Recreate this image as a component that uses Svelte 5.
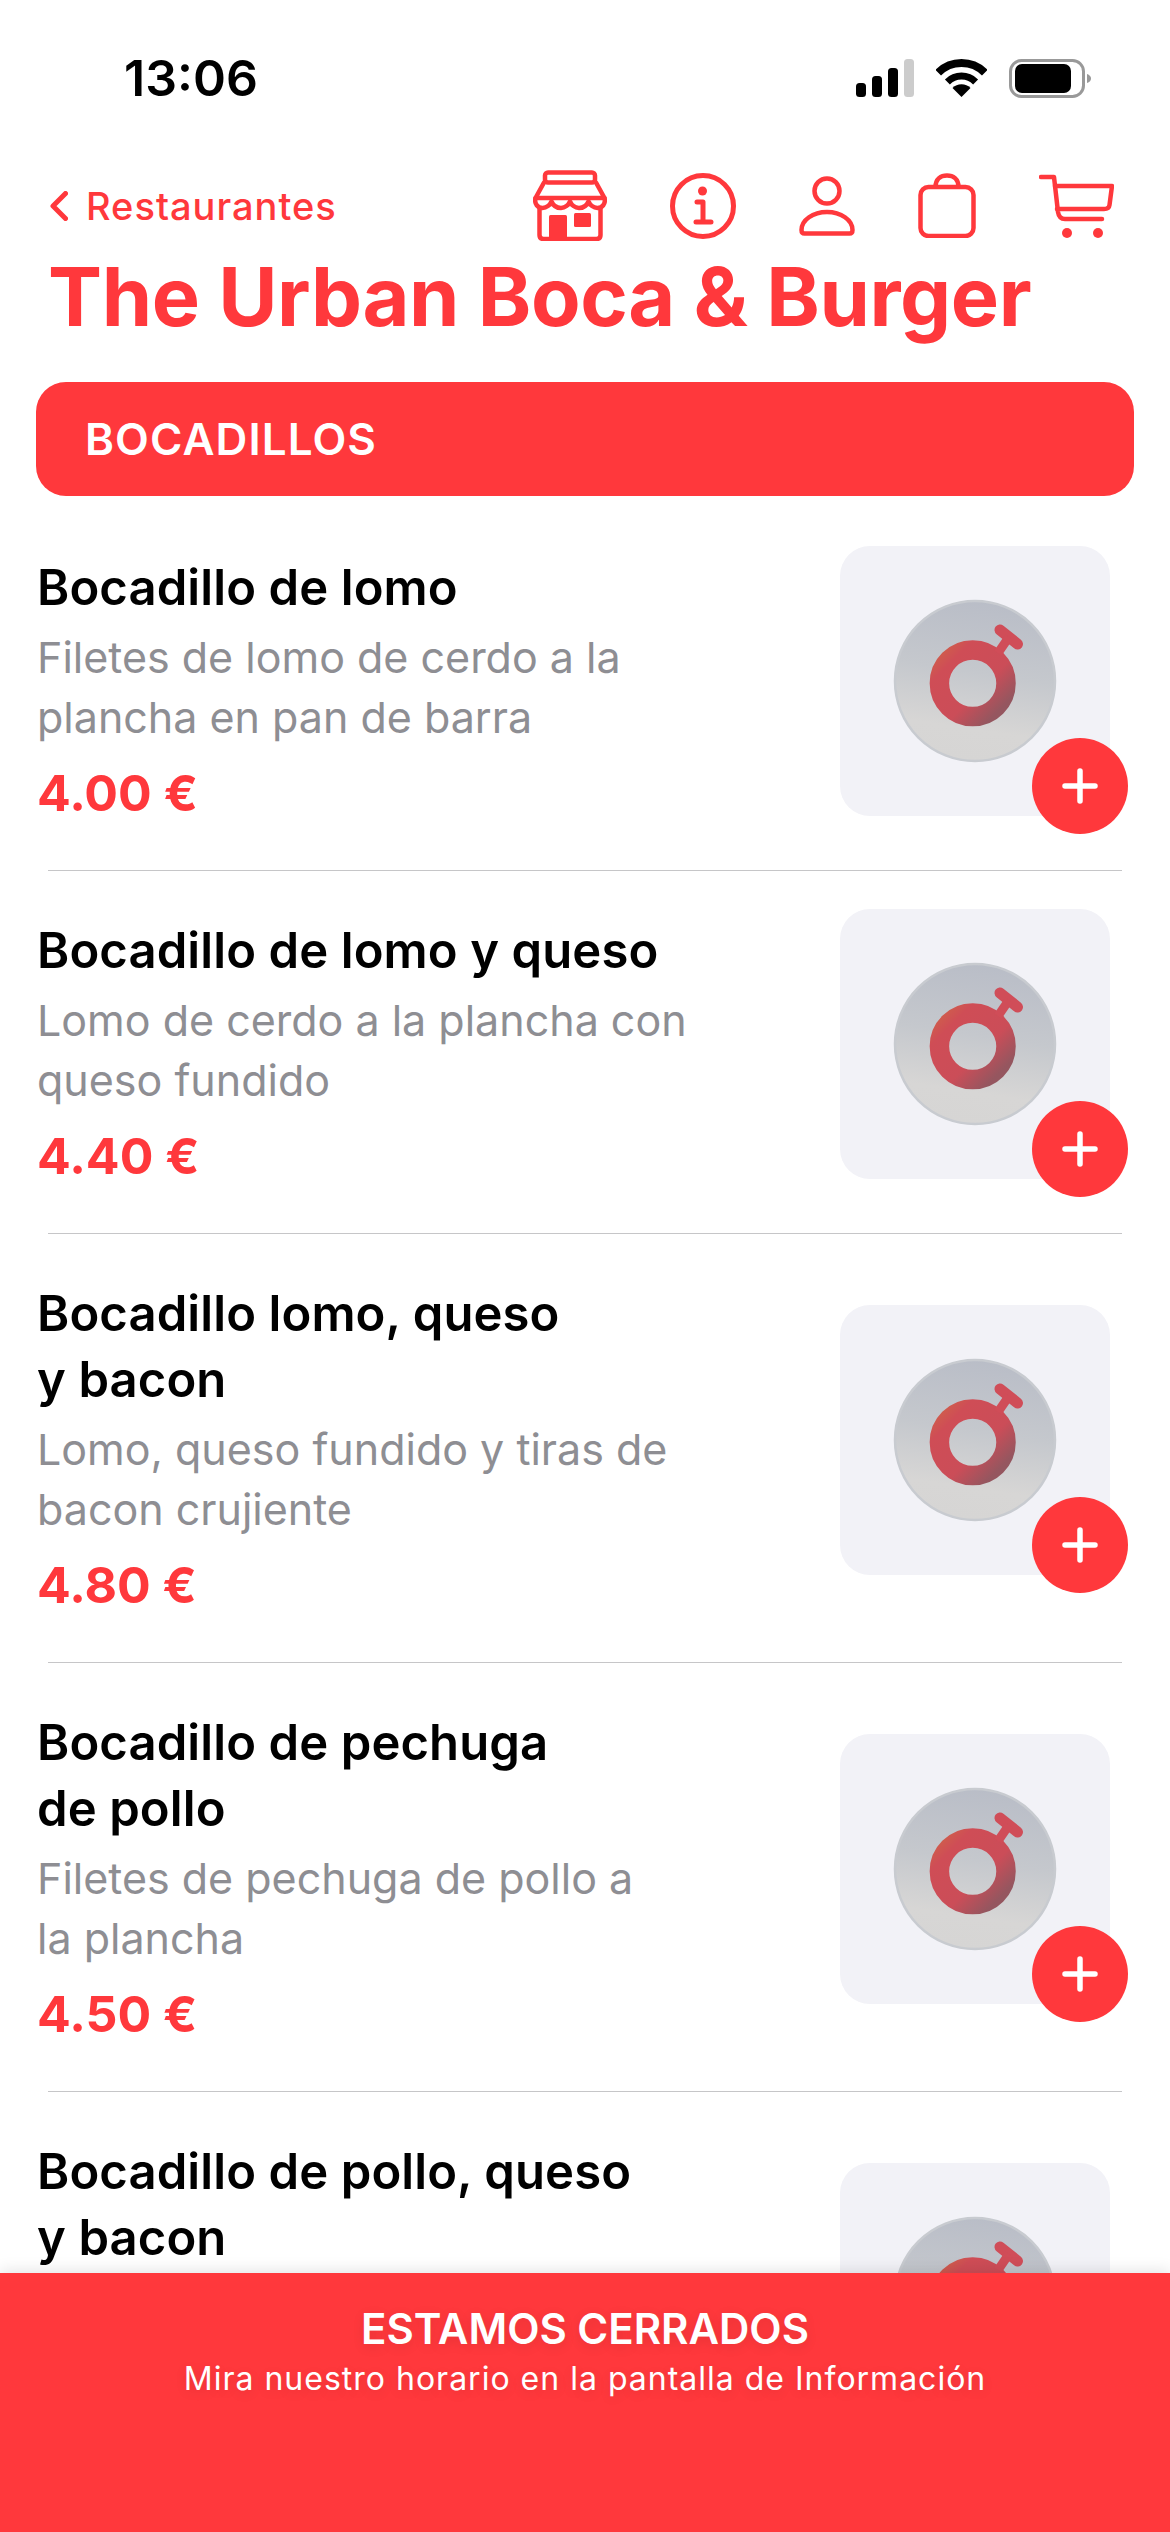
<script>
  const items = [
    { name: 'Bocadillo de lomo', desc: 'Filetes de lomo de cerdo a la\nplancha en pan de barra', price: '4.00 €' },
    { name: 'Bocadillo de lomo y queso', desc: 'Lomo de cerdo a la plancha con\nqueso fundido', price: '4.40 €' },
    { name: 'Bocadillo lomo, queso\ny bacon', desc: 'Lomo, queso fundido y tiras de\nbacon crujiente', price: '4.80 €' },
    { name: 'Bocadillo de pechuga\nde pollo', desc: 'Filetes de pechuga de pollo a\nla plancha', price: '4.50 €' },
    { name: 'Bocadillo de pollo, queso\ny bacon', desc: '', price: '' }
  ];
</script>

<div class="screen">
  <div class="status">
    <span class="time">13:06</span>
    <div class="status-icons">
      <svg class="signal" width="58" height="38" viewBox="0 0 58 38" aria-hidden="true">
        <rect x="0" y="24" width="10" height="14" rx="3.5" fill="#000" />
        <rect x="16" y="17" width="10" height="21" rx="3.5" fill="#000" />
        <rect x="32" y="9" width="10" height="29" rx="3.5" fill="#000" />
        <rect x="48" y="0" width="10" height="38" rx="3.5" fill="#ccc" />
      </svg>
      <svg class="wifi" width="51" height="38" viewBox="0 0 51 38" aria-hidden="true">
        <path d="M2.2 13.7A33 33 0 0 1 48.8 13.7" fill="none" stroke="#000" stroke-width="8" />
        <path d="M11.4 22.9A20 20 0 0 1 39.6 22.9" fill="none" stroke="#000" stroke-width="7" />
        <path d="M25.5 38L16.5 29A12.7 12.7 0 0 1 34.5 29Z" fill="#000" />
      </svg>
      <svg class="battery" width="82" height="39" viewBox="0 0 82 39" aria-hidden="true">
        <rect x="1.5" y="1.5" width="73" height="36" rx="11" fill="none" stroke="#999" stroke-width="3" />
        <rect x="6" y="5" width="56" height="29" rx="7" fill="#000" />
        <path d="M78 15q4 1.500 4 4.500t-4 4.500z" fill="#999" />
      </svg>
    </div>
  </div>

  <div class="nav">
    <div class="back">
      <svg width="18" height="30" viewBox="0 0 18 30" aria-hidden="true">
        <path d="M15.500 2.500L3 15L15.500 27.500" fill="none" stroke="#ff383c" stroke-width="5" stroke-linecap="round" stroke-linejoin="round" />
      </svg>
      <span>Restaurantes</span>
    </div>
    <div class="nav-icons">
      <svg width="74" height="71" viewBox="0 0 74 71" fill="none" stroke="#ff383c" stroke-width="4.500" stroke-linecap="round" stroke-linejoin="round" aria-hidden="true">
        <rect x="12" y="2.500" width="50" height="10" rx="3" />
        <path d="M11 12.500L2.500 28H71.500L63 12.500" />
        <path d="M2.500 28C1 34 5 38 9.500 38C13.500 38 17 35 18.500 31.500C20 35 23.500 38 28 38C32 38 35.500 35 37 31.500C38.500 35 42 38 46 38C50.500 38 54 35 55.500 31.500C57 35 60.500 38 64.500 38C69 38 73 34 71.500 28" />
        <path d="M6.500 38V65Q6.500 69 10.500 69H63.500Q67.500 69 67.500 65V38" />
        <rect x="16" y="45" width="18" height="23" rx="1.500" fill="#ff383c" stroke="none" />
        <rect x="41" y="43" width="17" height="14" rx="1.500" fill="#ff383c" stroke="none" />
      </svg>
      <svg width="66" height="66" viewBox="0 0 66 66" fill="none" stroke="#ff383c" stroke-width="5" stroke-linecap="round" stroke-linejoin="round" aria-hidden="true">
        <circle cx="33" cy="33" r="30.500" />
        <circle cx="32.500" cy="18" r="4.500" fill="#ff383c" stroke="none" />
        <path d="M27 29H33V49M26 49H41" />
      </svg>
      <svg width="56" height="60" viewBox="0 0 56 60" fill="none" stroke="#ff383c" stroke-width="4.500" stroke-linejoin="round" aria-hidden="true">
        <circle cx="28" cy="15" r="12.500" />
        <path d="M2.500 54C2.500 44 14 36 28 36C42 36 53.500 44 53.500 54Q53.500 57.500 50.500 57.500H5.500Q2.500 57.500 2.500 54Z" />
      </svg>
      <svg width="58" height="65" viewBox="0 0 58 65" fill="none" stroke="#ff383c" stroke-width="4.500" stroke-linejoin="round" aria-hidden="true">
        <rect x="2.500" y="14" width="53" height="49" rx="8" />
        <path d="M17.500 14C17.500 6 23 2.500 29 2.500S40.500 6 40.500 14" />
      </svg>
      <svg width="75" height="64" viewBox="0 0 75 64" fill="none" stroke="#ff383c" stroke-width="4.500" stroke-linecap="round" stroke-linejoin="round" aria-hidden="true">
        <path d="M2 3H15L19 38Q20 45 26 45H63" />
        <path d="M16 12H73L70.500 31Q70 35 65 35H18" />
        <circle cx="28" cy="59" r="5" fill="#ff383c" stroke="none" />
        <circle cx="59" cy="59" r="5" fill="#ff383c" stroke="none" />
      </svg>
    </div>
  </div>

  <h1>The Urban Boca &amp; Burger</h1>

  <div class="section">BOCADILLOS</div>

  <div class="list">
    {#each items as item, i}
      {#if i > 0}<div class="sep"></div>{/if}
      <div class="row" class:clipped={!item.desc}>
        <div class="info">
          <div class="name">{item.name}</div>
          {#if item.desc}
            <div class="desc">{item.desc}</div>
            <div class="price">{item.price}</div>
          {/if}
        </div>
        <div class="photo">
          <svg width="270" height="270" viewBox="0 0 270 270" aria-hidden="true">
            <defs>
              <linearGradient id="disc{i}" x1="0.6" y1="0" x2="0.45" y2="1">
                <stop offset="0" stop-color="#b9bdc7" />
                <stop offset="0.45" stop-color="#c5c8cd" />
                <stop offset="0.8" stop-color="#d7d6d5" />
                <stop offset="1" stop-color="#d6d5d4" />
              </linearGradient>
              <linearGradient id="ring{i}" x1="0.05" y1="0.05" x2="0.9" y2="0.9">
                <stop offset="0" stop-color="#cf5a4e" />
                <stop offset="0.15" stop-color="#cf4d56" />
                <stop offset="0.65" stop-color="#cb4d58" />
                <stop offset="1" stop-color="#95565f" />
              </linearGradient>
            </defs>
            <circle cx="135" cy="135" r="80" fill="url(#disc{i})" stroke="#c8cbd0" stroke-width="2.500" />
            <circle cx="132.700" cy="137.300" r="33.300" fill="none" stroke="url(#ring{i})" stroke-width="19.500" />
            <path d="M160 84L177.500 98" stroke="#d04d58" stroke-width="11" stroke-linecap="round" />
            <path d="M169 91L158 107" stroke="#d04d58" stroke-width="9" />
          </svg>
          <div class="add">
            <svg width="36" height="36" viewBox="0 0 36 36" aria-hidden="true">
              <path d="M18 3V33M3 18H33" stroke="#fff" stroke-width="5.500" stroke-linecap="round" />
            </svg>
          </div>
        </div>
      </div>
    {/each}
  </div>

  <div class="closed">
    <div class="closed-title">ESTAMOS CERRADOS</div>
    <div class="closed-sub">Mira nuestro horario en la pantalla de Información</div>
  </div>
</div>

<style>
  :global(body) {
    margin: 0;
    background: #fff;
  }
  .screen {
    position: relative;
    width: 1170px;
    height: 2532px;
    overflow: hidden;
    background: #fff;
    font-family: Inter, "Liberation Sans", sans-serif;
  }
  .status {
    display: flex;
    align-items: center;
    justify-content: space-between;
    height: 156px;
    padding: 0 79px 0 124px;
    box-sizing: border-box;
  }
  .time {
    font-size: 50px;
    font-weight: 600;
    color: #000;
  }
  .status-icons {
    display: flex;
    align-items: center;
    gap: 22px;
  }
  .nav {
    display: flex;
    align-items: center;
    justify-content: space-between;
    height: 71px;
    margin-top: 14px;
    padding: 0 56px 0 50px;
  }
  .back {
    display: flex;
    align-items: center;
    gap: 18px;
    color: #ff383c;
    font-size: 38px;
    font-weight: 500;
    letter-spacing: 1px;
  }
  .nav-icons {
    display: flex;
    align-items: center;
    gap: 63px;
  }
  h1 {
    margin: 8px 0 0;
    padding-left: 48px;
    color: #ff383c;
    font-size: 81px;
    font-weight: 700;
    line-height: 96px;
    letter-spacing: -0.42px;
    white-space: nowrap;
  }
  .section {
    display: flex;
    align-items: center;
    height: 114px;
    margin: 37px 36px 0;
    padding-left: 49px;
    box-sizing: border-box;
    border-radius: 30px;
    background: #ff383c;
    color: #fff;
    font-size: 44px;
    font-weight: 600;
    letter-spacing: 1.1px;
  }
  .list {
    padding-top: 12px;
  }
  .row {
    display: flex;
    justify-content: space-between;
    align-items: center;
    padding: 0 60px 0 37px;
  }
  .row.clipped {
    min-height: 428px;
    align-items: flex-start;
  }
  .row.clipped .photo {
    margin-top: 71px;
  }
  .info {
    padding: 47px 0 47px;
  }
  .name {
    color: #000;
    font-size: 49px;
    font-weight: 600;
    line-height: 66px;
    letter-spacing: 0.1px;
    white-space: pre-line;
  }
  .desc {
    margin-top: 6px;
    color: #8e8e93;
    font-size: 43px;
    line-height: 60px;
    white-space: pre-line;
  }
  .price {
    margin-top: 16px;
    color: #ff383c;
    font-size: 50px;
    font-weight: 700;
    line-height: 60px;
  }
  .photo {
    position: relative;
    flex: none;
    width: 270px;
    height: 270px;
    margin-bottom: 16px;
    border-radius: 30px;
    background: #f2f2f7;
  }
  .photo > svg {
    display: block;
  }
  .add {
    position: absolute;
    right: -18px;
    bottom: -18px;
    display: flex;
    align-items: center;
    justify-content: center;
    width: 96px;
    height: 96px;
    border-radius: 50%;
    background: #ff383c;
  }
  .sep {
    height: 1px;
    margin: 0 48px;
    background: #c6c6c8;
  }
  .closed {
    position: absolute;
    left: 0;
    right: 0;
    bottom: 0;
    height: 259px;
    box-sizing: border-box;
    padding-top: 31px;
    text-align: center;
    background: #ff383c;
    color: #fff;
    box-shadow: 0 -3px 14px rgba(0, 0, 0, 0.1);
    text-shadow: 0 3px 12px rgba(0, 0, 0, 0.1);
  }
  .closed-title {
    font-size: 42px;
    font-weight: 600;
    line-height: 50px;
  }
  .closed-sub {
    margin-top: 4px;
    font-size: 32px;
    line-height: 42px;
    letter-spacing: 1px;
  }
</style>
